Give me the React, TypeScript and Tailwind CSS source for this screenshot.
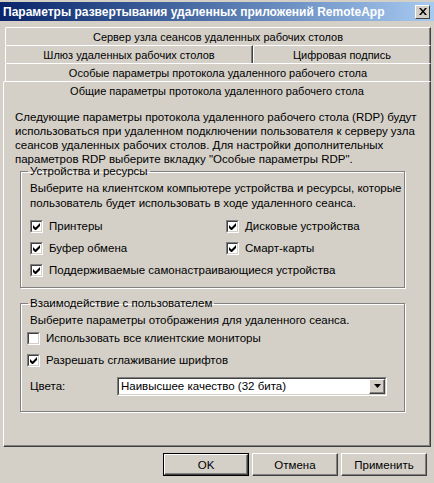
import React from "react";

function Check({ checked }: { checked: boolean }) {
  return (
    <span className="relative inline-block h-[13px] w-[13px] shrink-0 border-t border-l border-t-[#808080] border-l-[#808080] border-b border-r border-b-white border-r-white">
      <span className="flex h-full w-full items-center justify-center border-t border-l border-t-[#404040] border-l-[#404040] border-b border-r border-b-[#d4d0c8] border-r-[#d4d0c8] bg-white">
        {checked && (
          <svg width="7" height="7" viewBox="0 0 7 7" className="block">
            <path d="M0 2v3l2 2h1l4-4V0L2.5 4.5z" fill="#000" />
          </svg>
        )}
      </span>
    </span>
  );
}

function CheckRow({ checked, label, className }: { checked: boolean; label: string; className?: string }) {
  return (
    <div className={"flex items-center gap-[6px] whitespace-nowrap " + (className ?? "")}>
      <Check checked={checked} />
      <span>{label}</span>
    </div>
  );
}

export default function App() {
  return (
    <div
      className="relative h-[483px] w-[434px] overflow-hidden bg-[#d4d0c8] text-[11.5px] leading-[14px] text-black"
      style={{ fontFamily: '"Liberation Sans", Arial, sans-serif' }}
    >
      {/* Title bar */}
      <div className="pt-[2px]">
        <div className="flex h-[19px] items-center justify-between bg-gradient-to-r from-[#0a246a] to-[#a6caf0] pl-[3px] pr-[4px]">
          <span className="text-[12px] font-bold text-white">
            Параметры развертывания удаленных приложений RemoteApp
          </span>
          <span className="flex h-[14px] w-[15px] items-center justify-center border-t border-l border-t-white border-l-white border-b border-r border-b-[#404040] border-r-[#404040] bg-[#d4d0c8]">
            <svg width="8" height="7" viewBox="0 0 8 7" className="block">
              <path d="M0 0h2l2 2.5L6 0h2L5 3.5 8 7H6L4 4.5 2 7H0l3-3.5z" fill="#000" />
            </svg>
          </span>
        </div>
      </div>

      {/* Tabs */}
      <div className="mt-[6px] ml-[5px] mr-[3px] text-[11px]">
        <div className="flex h-[18px] items-center justify-center rounded-tl-[2px] border-t border-l border-t-white border-l-white border-r border-r-[#404040] shadow-[inset_-1px_0_0_#808080]">
          Сервер узла сеансов удаленных рабочих столов
        </div>
        <div className="flex h-[18px]">
          <div className="flex w-[248px] items-center justify-center rounded-tl-[2px] border-t border-l border-t-white border-l-white border-r border-r-[#404040] shadow-[inset_-1px_0_0_#808080]">
            Шлюз удаленных рабочих столов
          </div>
          <div className="flex flex-1 items-center justify-center rounded-tl-[2px] border-t border-l border-t-white border-l-white border-r border-r-[#404040] shadow-[inset_-1px_0_0_#808080]">
            Цифровая подпись
          </div>
        </div>
        <div className="flex h-[18px] items-center justify-center rounded-tl-[2px] border-t border-l border-t-white border-l-white border-r border-r-[#404040] shadow-[inset_-1px_0_0_#808080]">
          Особые параметры протокола удаленного рабочего стола
        </div>
      </div>

      {/* Selected tab + panel */}
      <div className="mx-[3px] h-[366px] rounded-tl-[2px] border-t border-l border-t-white border-l-white border-r border-b border-r-[#404040] border-b-[#404040] shadow-[inset_-1px_-1px_0_#808080]">
        <div className="flex h-[17px] items-center justify-center text-[11px]">
          Общие параметры протокола удаленного рабочего стола
        </div>

        <div className="pl-[11px]">
          <p className="mt-[11px] whitespace-nowrap">
            Следующие параметры протокола удаленного рабочего стола (RDP) будут
            <br />
            использоваться при удаленном подключении пользователя к серверу узла
            <br />
            сеансов удаленных рабочих столов. Для настройки дополнительных
            <br />
            параметров RDP выберите вкладку "Особые параметры RDP".
          </p>

          <fieldset className="ml-[5px] mt-[-2px] w-[385px] border border-[#808080] pb-[6px] shadow-[1px_1px_0_#ffffff,inset_1px_1px_0_#ffffff]">
            <legend className="ml-[7px] px-[2px]">Устройства и ресурсы</legend>
            <p className="mt-[3px] whitespace-nowrap pl-[9px] leading-[15px]">
              Выберите на клиентском компьютере устройства и ресурсы, которые
              <br />
              пользователь будет использовать в ходе удаленного сеанса.
            </p>
            <div className="mt-[4px] grid grid-cols-[196px_1fr] pl-[9px]">
              <CheckRow checked label="Принтеры" className="h-[22px]" />
              <CheckRow checked label="Дисковые устройства" className="h-[22px]" />
              <CheckRow checked label="Буфер обмена" className="h-[22px]" />
              <CheckRow checked label="Смарт-карты" className="h-[22px]" />
              <CheckRow checked label="Поддерживаемые самонастраивающиеся устройства" className="col-span-2 h-[22px]" />
            </div>
          </fieldset>

          <fieldset className="ml-[5px] mt-[8px] w-[385px] border border-[#808080] pb-[16px] shadow-[1px_1px_0_#ffffff,inset_1px_1px_0_#ffffff]">
            <legend className="ml-[7px] px-[2px]">Взаимодействие с пользователем</legend>
            <p className="mt-[3px] whitespace-nowrap pl-[9px]">Выберите параметры отображения для удаленного сеанса.</p>
            <div className="pl-[6px]">
              <CheckRow checked={false} label="Использовать все клиентские мониторы" className="h-[22px]" />
              <CheckRow checked label="Разрешать сглаживание шрифтов" className="h-[22px]" />
            </div>
            <div className="mt-[6px] flex h-[18px] items-center pl-[9px]">
              <span className="w-[87px]">Цвета:</span>
              <div className="flex h-[19px] w-[270px] items-stretch border-t border-l border-t-[#808080] border-l-[#808080] border-b border-r border-b-white border-r-white">
                <div className="flex flex-1 items-stretch border-t border-l border-t-[#404040] border-l-[#404040] border-b border-r border-b-[#d4d0c8] border-r-[#d4d0c8] bg-white">
                  <span className="flex flex-1 items-center pl-[2px]">Наивысшее качество (32 бита)</span>
                  <span className="flex w-[16px] items-center justify-center border-t border-l border-t-white border-l-white border-b border-r border-b-[#404040] border-r-[#404040] bg-[#d4d0c8] shadow-[inset_-1px_-1px_0_#808080]">
                    <svg width="7" height="4" viewBox="0 0 7 4" className="block">
                      <path d="M0 0h7L3.5 4z" fill="#000" />
                    </svg>
                  </span>
                </div>
              </div>
            </div>
          </fieldset>
        </div>
      </div>

      {/* Buttons */}
      <div className="mt-[6px] flex justify-end gap-[3px] pr-[7px]">
        <div className="flex h-[23px] w-[86px] items-center justify-center border border-black">
          <div className="flex h-full w-full items-center justify-center border-t border-l border-t-white border-l-white border-b border-r border-b-[#404040] border-r-[#404040] shadow-[inset_-1px_-1px_0_#808080]">
            OK
          </div>
        </div>
        <div className="flex h-[23px] w-[86px] items-center justify-center border-t border-l border-t-white border-l-white border-b border-r border-b-[#404040] border-r-[#404040] shadow-[inset_-1px_-1px_0_#808080]">
          Отмена
        </div>
        <div className="flex h-[23px] w-[86px] items-center justify-center border-t border-l border-t-white border-l-white border-b border-r border-b-[#404040] border-r-[#404040] shadow-[inset_-1px_-1px_0_#808080]">
          Применить
        </div>
      </div>
    </div>
  );
}
